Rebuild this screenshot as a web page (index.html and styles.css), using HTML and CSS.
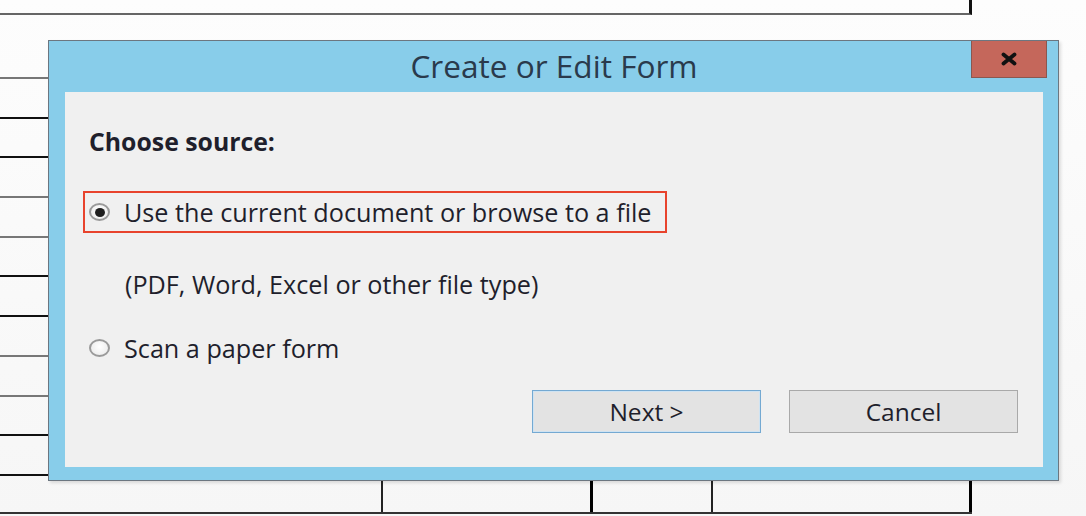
FILE: index.html
```html
<html>
    <head>
        <link rel="stylesheet" href="styles.css">
    </head>
    <body>
        <div class="doc">
            <div class="doc-top"></div>
            <div class="doc-row doc-row--head thin"></div>
            <div class="doc-row thick"></div>
            <div class="doc-row thick"></div>
            <div class="doc-row thin"></div>
            <div class="doc-row thin"></div>
            <div class="doc-row thick"></div>
            <div class="doc-row thick"></div>
            <div class="doc-row thin"></div>
            <div class="doc-row thin"></div>
            <div class="doc-row thick"></div>
            <div class="doc-row thick"></div>
            <div class="doc-cells">
                <span class="cell cell--a"></span>
                <span class="cell cell--b"></span>
                <span class="cell cell--c"></span>
                <span class="cell cell--d"></span>
            </div>

            <section class="dialog">
                <header class="dialog-title">
                    <h1>Create or Edit Form</h1>
                    <button class="dialog-close" type="button" aria-label="Close">
                        <svg width="18" height="14" viewBox="0 0 18 14">
                            <path d="M3.5 2.5 L14.5 11.5 M14.5 2.5 L3.5 11.5" stroke="#111" stroke-width="3.8" stroke-linecap="round"/>
                        </svg>
                    </button>
                </header>
                <div class="dialog-body">
                    <p class="label">Choose source:</p>
                    <div class="choice choice--active">
                        <span class="radio radio--on"></span>
                        <span>Use the current document or browse to a file</span>
                    </div>
                    <p class="hint">(PDF, Word, Excel or other file type)</p>
                    <div class="choice">
                        <span class="radio"></span>
                        <span>Scan a paper form</span>
                    </div>
                    <div class="actions">
                        <button type="button" class="btn btn--default">Next &gt;</button>
                        <button type="button" class="btn">Cancel</button>
                    </div>
                </div>
            </section>
        </div>
    </body>
</html>
```

FILE: styles.css
```css
* { box-sizing: border-box; }

body {
    margin: 0;
    background: #fafafa;
    font-family: "Open Sans", "Noto Sans", sans-serif;
}

.doc {
    position: relative;
    width: 1086px;
    height: 516px;
    overflow: hidden;
    background: linear-gradient(#fdfdfd, #f6f6f6);
    display: flex;
    flex-direction: column;
}

.doc-top {
    width: 972px;
    height: 15px;
    border-right: 3px solid #111;
    border-bottom: 2px solid #666;
    flex: none;
}

.doc-row {
    width: 970px;
    height: 39.7px;
    flex: none;
}
.doc-row--head { height: 64px; }
.doc-row.thin { border-bottom: 2px solid #777; }
.doc-row.thick { border-bottom: 2px solid #111; }

.doc-cells {
    display: flex;
    width: 972px;
    height: 38px;
    border-bottom: 2px solid #333;
    flex: none;
}
.cell { height: 100%; border-right: 2px solid #222; }
.cell--a { width: 383px; }
.cell--b { width: 210px; border-right-width: 3px; border-right-color: #000; }
.cell--c { width: 120px; }
.cell--d { width: 259px; border-right-width: 3px; border-right-color: #000; }

/* dialog over the document */
.dialog {
    position: absolute;
    left: 48px;
    top: 40px;
    width: 1011px;
    height: 441px;
    background: #88cdea;
    border: 1px solid #6c7680;
    box-shadow: 2px 2px 3px rgba(0, 0, 0, 0.12);
    display: flex;
    flex-direction: column;
    padding: 0 15px 13px 16px;
}

.dialog-title {
    height: 51px;
    display: flex;
    align-items: center;
    justify-content: center;
    flex: none;
}
.dialog-title h1 {
    margin: 0 0 2px 0;
    font-size: 31.6px;
    font-weight: 400;
    color: #2a3a4c;
}

.dialog-close {
    position: absolute;
    top: 0;
    right: 11px;
    width: 76px;
    height: 37px;
    border: 1px solid #8a5750;
    border-top: 0;
    background: #c5675b;
    display: grid;
    place-items: center;
    padding: 0;
}

.dialog-body {
    flex: 1;
    background: #f0f0f0;
    padding: 33px 24px 0 18px;
    display: flex;
    flex-direction: column;
    color: #1f1f2c;
    font-size: 25.2px;
}

.label {
    margin: 0 0 0 6px;
    font-weight: 700;
    font-size: 24.8px;
    line-height: 32px;
}

.choice {
    display: flex;
    align-items: center;
    gap: 14px;
    height: 42px;
    padding-left: 4px;
    width: 584px;
    border: 2px solid transparent;
    white-space: nowrap;
}
.choice--active {
    margin-top: 34px;
    border-color: #e8432d;
}
.choice + .hint { margin-top: 30px; }

.hint {
    margin: 0 0 0 42px;
    line-height: 42px;
}

.hint + .choice { margin-top: 22px; }

.radio {
    width: 21px;
    height: 18px;
    border-radius: 50%;
    border: 2px solid #9a9a9a;
    background: radial-gradient(circle at 50% 40%, #ffffff, #e8e8e8);
    display: grid;
    place-items: center;
    flex: none;
}
.radio--on::after {
    content: "";
    width: 10px;
    height: 9px;
    border-radius: 50%;
    background: #1e1e1e;
}

.actions {
    display: flex;
    justify-content: flex-end;
    gap: 28px;
    margin-top: 21px;
    padding-right: 1px;
}

.btn {
    width: 229px;
    height: 43px;
    background: #e3e3e3;
    border: 1px solid #a9a9a9;
    font-family: inherit;
    font-size: 24.5px;
    color: #1f1f2c;
    padding: 0;
}
.btn--default {
    border-color: #74a9d2;
    box-shadow: inset 0 0 0 1px #cfe3f2;
}
```
